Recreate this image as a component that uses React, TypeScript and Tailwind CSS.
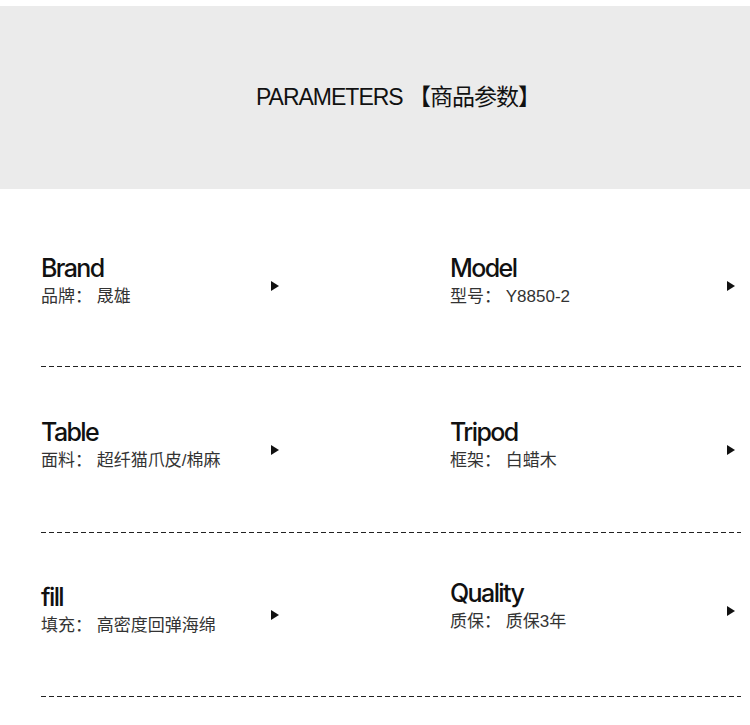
const rows = [
  [
    { title: "Brand", label: "品牌：", value: "晟雄", shift: "" },
    { title: "Model", label: "型号：", value: "Y8850-2", shift: "" },
  ],
  [
    { title: "Table", label: "面料：", value: "超纤猫爪皮/棉麻", shift: "" },
    { title: "Tripod", label: "框架：", value: "白蜡木", shift: "" },
  ],
  [
    { title: "fill", label: "填充：", value: "高密度回弹海绵", shift: "" },
    { title: "Quality", label: "质保：", value: "质保3年", shift: "-mt-[4px]" },
  ],
];

const rowSpacing = [
  { top: "pt-[64px]", bottom: "mt-[58px]" },
  { top: "pt-[50px]", bottom: "mt-[60px]" },
  { top: "pt-[49px]", bottom: "mt-[59px]" },
];

const Arrow = () => (
  <svg width="8" height="10" viewBox="0 0 8 10" className="shrink-0">
    <polygon points="0,0 8,5 0,10" fill="#111" />
  </svg>
);

const Item = ({
  title,
  label,
  value,
  width,
  shift,
}: {
  title: string;
  label: string;
  value: string;
  width: string;
  shift: string;
}) => (
  <div className={`flex items-start justify-between ${width} ${shift}`}>
    <div className="flex flex-col">
      <span className="font-['Inter','Liberation_Sans',sans-serif] text-[25px] leading-[30px] font-medium tracking-[-1.6px] text-[#111]">
        {title}
      </span>
      <span className="mt-[2px] font-['Liberation_Sans','Noto_Sans_CJK_SC',sans-serif] text-[17px] leading-[23px] text-[#333]">
        {label} {value}
      </span>
    </div>
    <div className="mt-[28px]">
      <Arrow />
    </div>
  </div>
);

export default function App() {
  return (
    <div className="min-h-screen bg-white pt-[6px]">
      {/* header band */}
      <div className="flex h-[183px] items-center justify-center bg-[#ebebeb] pl-[46px]">
        <h1 className="font-['Liberation_Sans','Noto_Sans_CJK_SC',sans-serif] text-[23px] tracking-[-1px] text-[#111]">
          PARAMETERS 【商品参数】
        </h1>
      </div>

      <div className="pl-[41px] pr-[9px]">
        {rows.map((row, i) => (
          <div key={i} className={rowSpacing[i].top}>
            <div className="grid grid-cols-[409px_1fr]">
              <Item {...row[0]} width="w-[238px]" />
              <Item {...row[1]} width="w-[285px]" />
            </div>
            <div
              className={`${rowSpacing[i].bottom} h-px bg-[repeating-linear-gradient(to_right,#222_0_5px,transparent_5px_8px)]`}
            />
          </div>
        ))}
      </div>
    </div>
  );
}
